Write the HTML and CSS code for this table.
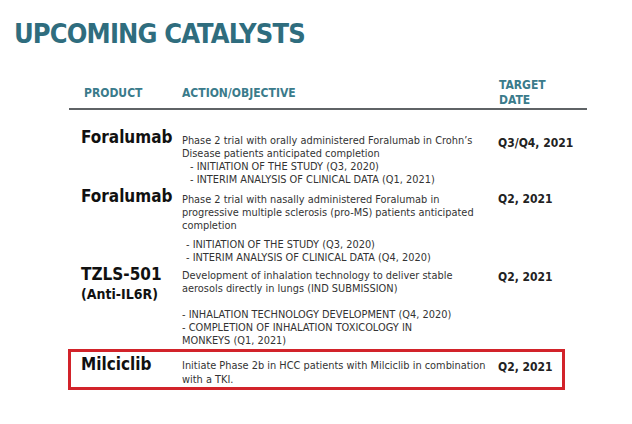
FILE: index.html
```html
<!DOCTYPE html>
<html>
<head>
<meta charset="utf-8">
<link rel="stylesheet" href="styles.css">
</head>
<body>
<div class="slide">
  <h1 class="title">UPCOMING CATALYSTS</h1>
  <div class="table">
    <div class="head">
      <div class="h-prod">PRODUCT</div>
      <div class="h-act">ACTION/OBJECTIVE</div>
      <div class="h-date">TARGET<br>DATE</div>
    </div>
    <div class="row row1">
      <div class="prod">Foralumab</div>
      <div class="desc">Phase 2 trial with orally administered Foralumab in Crohn’s<br>Disease patients anticipated completion<br><span class="ind">- INITIATION OF THE STUDY (Q3, 2020)</span><br><span class="ind">- INTERIM ANALYSIS OF CLINICAL DATA (Q1, 2021)</span></div>
      <div class="date">Q3/Q4, 2021</div>
    </div>
    <div class="row row2">
      <div class="prod">Foralumab</div>
      <div class="desc">Phase 2 trial with nasally administered Foralumab in<br>progressive multiple sclerosis (pro-MS) patients anticipated<br>completion<div class="sub">- INITIATION OF THE STUDY (Q3, 2020)<br>- INTERIM ANALYSIS OF CLINICAL DATA (Q4, 2020)</div></div>
      <div class="date">Q2, 2021</div>
    </div>
    <div class="row row3">
      <div class="prod">TZLS-501<div class="prod-sub">(Anti-IL6R)</div></div>
      <div class="desc">Development of inhalation technology to deliver stable<br>aerosols directly in lungs (IND SUBMISSION)<div class="sub sub3">- INHALATION TECHNOLOGY DEVELOPMENT (Q4, 2020)<br>- COMPLETION OF INHALATION TOXICOLOGY IN<br>MONKEYS (Q1, 2021)</div></div>
      <div class="date">Q2, 2021</div>
    </div>
    <div class="row row4">
      <div class="prod">Milciclib</div>
      <div class="desc">Initiate Phase 2b in HCC patients with Milciclib in combination<br>with a TKI.</div>
      <div class="date">Q2, 2021</div>
    </div>
  </div>
</div>
</body>
</html>
```

FILE: styles.css
```css
html, body {
  margin: 0;
  padding: 0;
  background: #ffffff;
}
body {
  font-family: "DejaVu Sans Condensed", "DejaVu Sans", sans-serif;
  width: 632px;
  height: 424px;
  overflow: hidden;
}
.slide {
  padding: 18px 0 0 0;
}
.title {
  margin: 0 0 0 14px;
  font-size: 27px;
  line-height: 32px;
  font-weight: bold;
  color: #2f6d7e;
  letter-spacing: -0.85px;
}
.table {
  margin: 28px 0 0 69px;
  width: 518px;
}
.head {
  display: grid;
  grid-template-columns: 113px 316px 1fr;
  align-items: center;
  padding-bottom: 0;
  border-bottom: 2px solid #5f6366;
  color: #3a7b8b;
  font-weight: bold;
  font-size: 12px;
  line-height: 15px;
}
.h-prod { padding-left: 15px; }
.h-date { padding-left: 1px; }
.row {
  display: grid;
  grid-template-columns: 113px 316px 1fr;
  align-items: start;
}
.prod {
  padding-left: 12px;
  font-weight: bold;
  font-size: 17px;
  line-height: 20px;
  color: #111;
}
.prod-sub {
  font-size: 14px;
  line-height: 20px;
  margin-top: 0;
}
.desc {
  font-family: "DejaVu Sans", sans-serif;
  font-size: 9.8px;
  line-height: 13px;
  color: #333;
  white-space: nowrap;
  padding-top: 7px;
}
.ind { padding-left: 8px; }
.sub { margin-top: 6px; padding-left: 4px; }
.sub3 { margin-top: 13px; padding-left: 0; }
.date {
  font-weight: bold;
  font-size: 12px;
  line-height: 16px;
  color: #222;
  padding-top: 8px;
}
.row1 { margin-top: 17px; }
.row2 .date { padding-top: 5px; }
.row3 .desc { padding-top: 5px; }
.row3 .date { padding-top: 5px; }
.row4 {
  margin: 2px 22px 0 -1px;
  border: 3px solid #d2232a;
  padding: 2px 0 0 0;
  grid-template-columns: 111px 316px 1fr;
}
.row4 .prod { padding-left: 10px; }
.row4 .desc { line-height: 14px; padding-top: 5px; }
.row4 .date { padding-top: 5px; }
```
